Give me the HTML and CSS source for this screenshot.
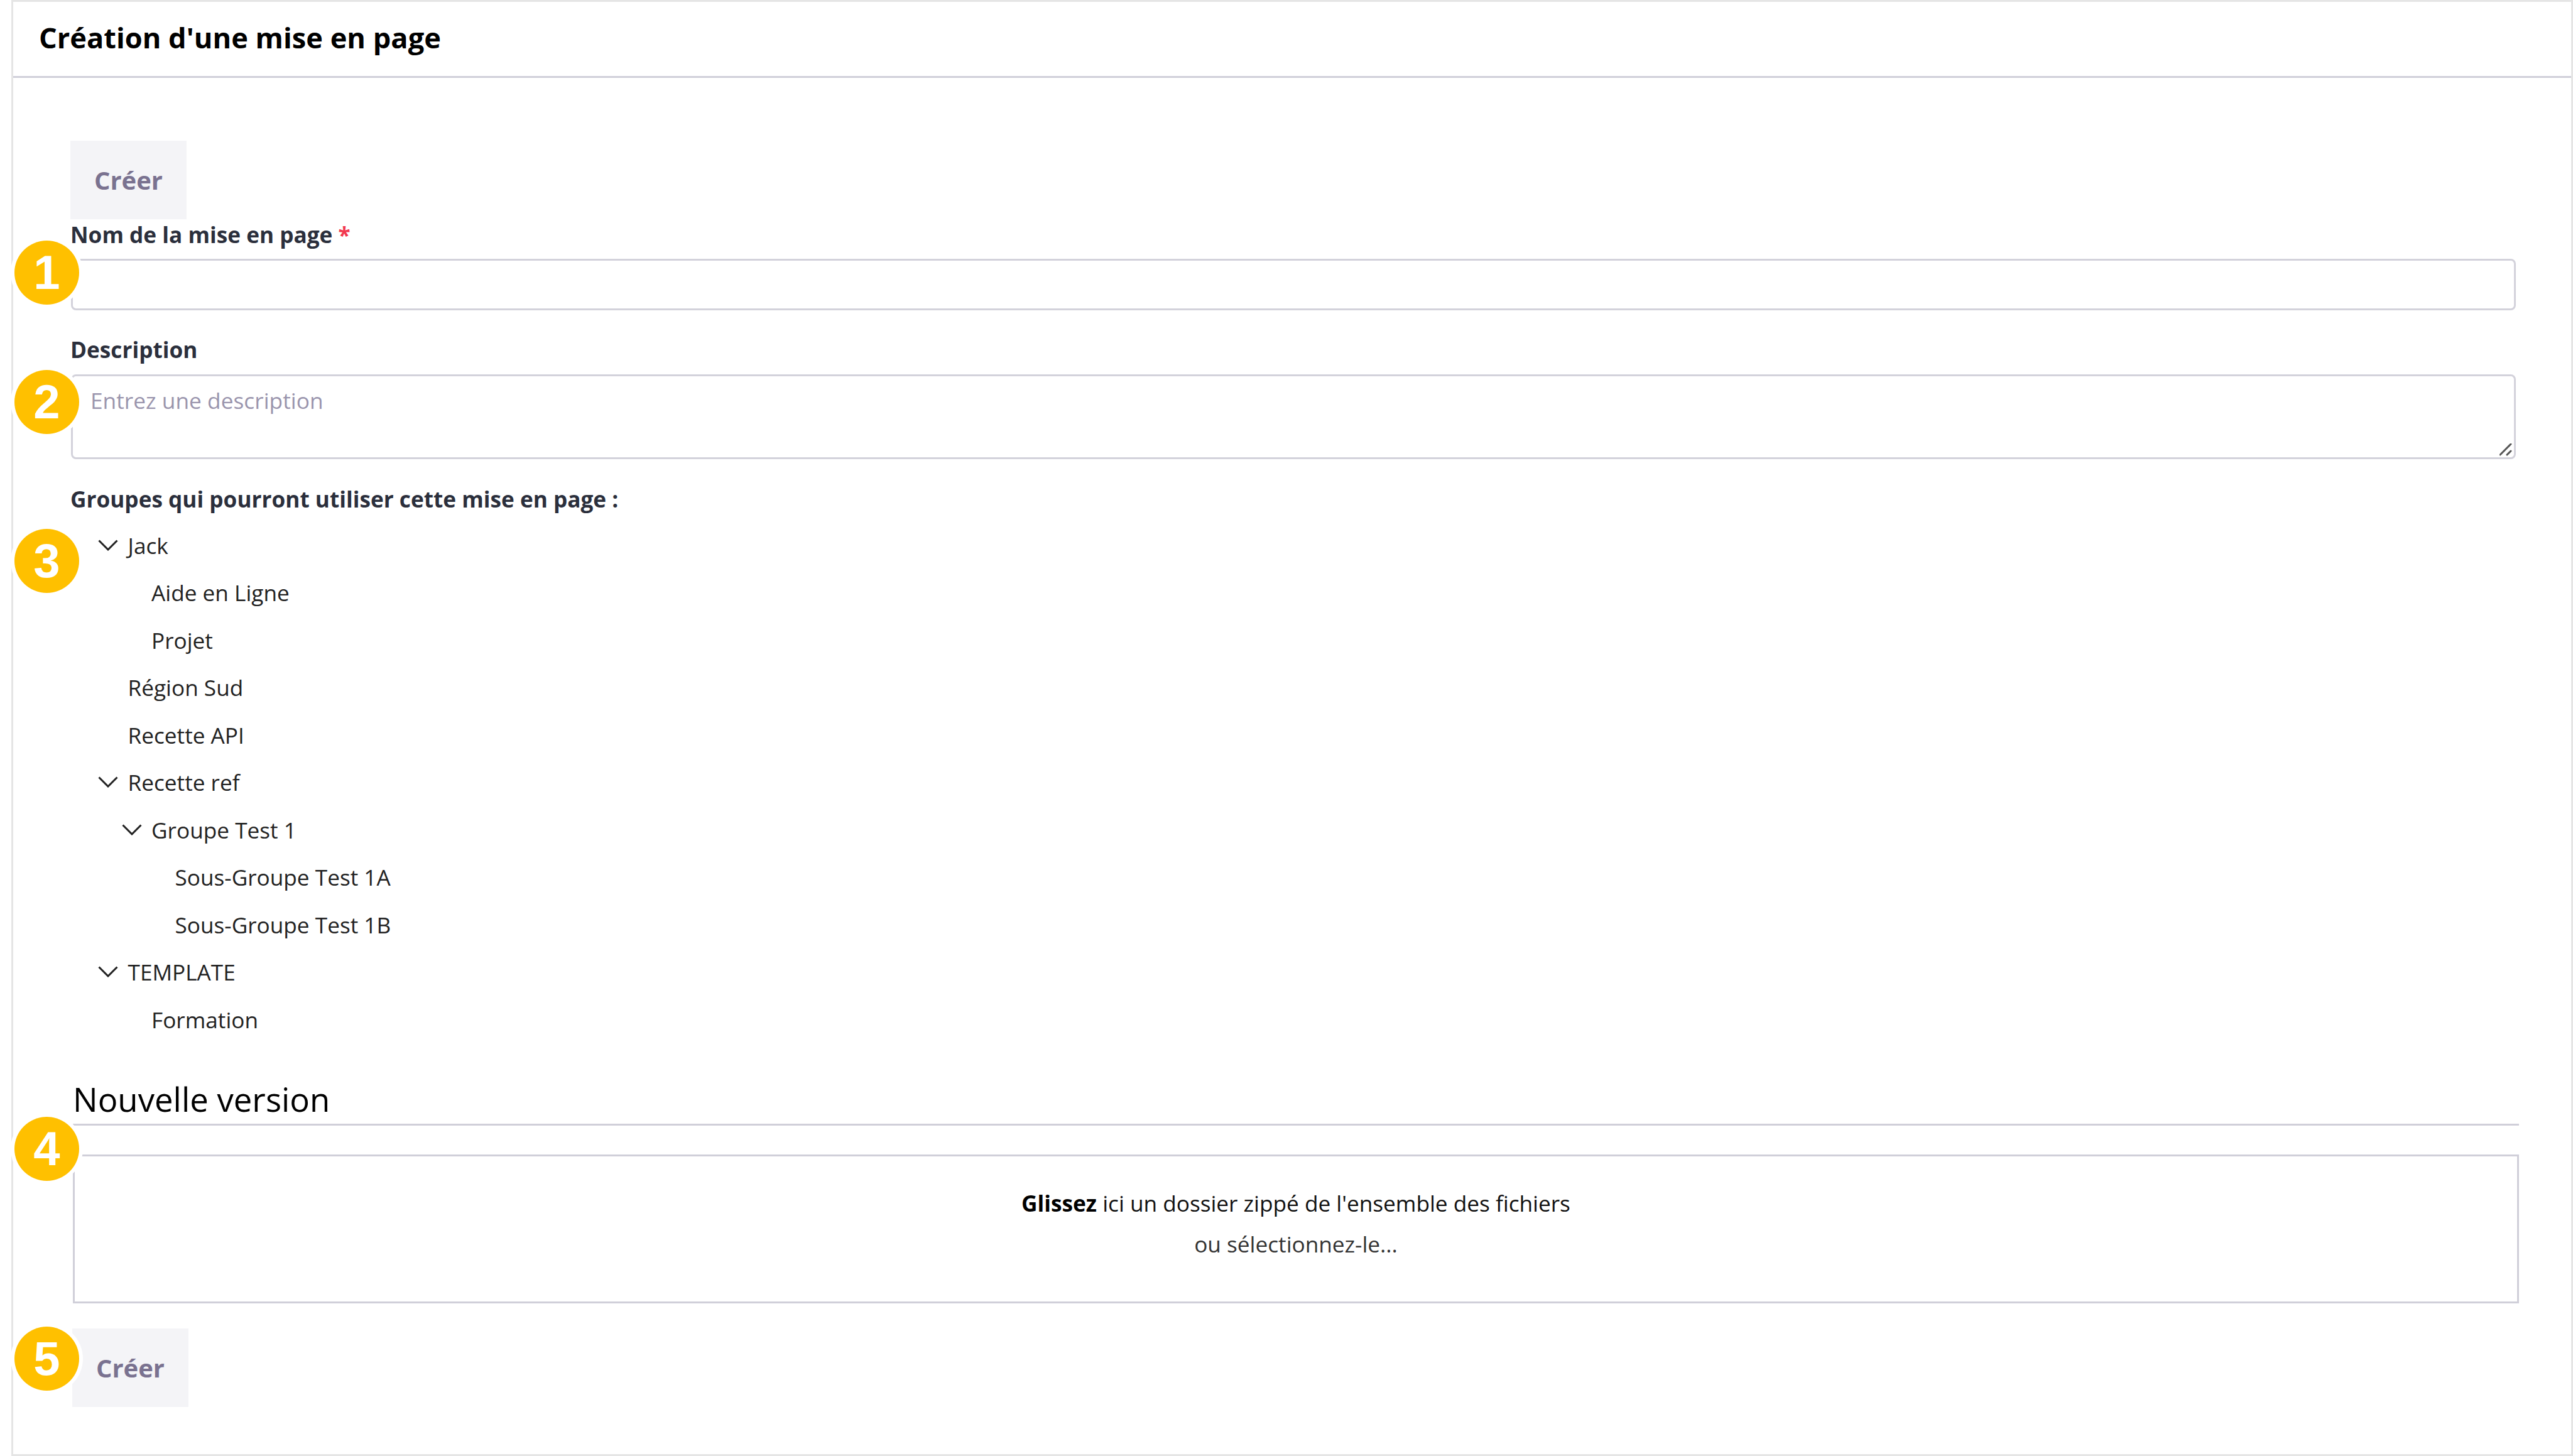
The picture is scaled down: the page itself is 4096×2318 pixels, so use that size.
FILE: index.html
```html
<!DOCTYPE html>
<html lang="fr">
<head>
<meta charset="utf-8">
<title>Création d'une mise en page</title>
<link rel="stylesheet" href="styles.css">
</head>
<body>
<div class="panel">
  <header class="panel-head"><h1 class="panel-title">Création d'une mise en page</h1></header>
  <main class="panel-body">
    <button class="btn" type="button">Créer</button>
    <label class="field-label label-name" for="name">Nom de la mise en page<span class="req"> *</span></label>
    <input class="text-input" id="name" type="text">
    <label class="field-label label-desc" for="desc">Description</label>
    <div class="area-wrap">
      <textarea class="text-area" id="desc" placeholder="Entrez une description"></textarea>
      <svg class="grip" viewBox="0 0 20 20" aria-hidden="true"><path d="M1 18 18 1M12 18 18 12"/></svg>
    </div>
    <div class="field-label label-groups">Groupes qui pourront utiliser cette mise en page :</div>
    <ul class="tree">
      <li class="row"><svg class="chev" viewBox="0 0 32 18"><path d="M1.5 1.5 16 16 30.5 1.5"/></svg><span>Jack</span></li>
      <li class="row depth1"><span class="slot"></span><span>Aide en Ligne</span></li>
      <li class="row depth1"><span class="slot"></span><span>Projet</span></li>
      <li class="row"><span class="slot"></span><span>Région Sud</span></li>
      <li class="row"><span class="slot"></span><span>Recette API</span></li>
      <li class="row"><svg class="chev" viewBox="0 0 32 18"><path d="M1.5 1.5 16 16 30.5 1.5"/></svg><span>Recette ref</span></li>
      <li class="row depth1"><svg class="chev" viewBox="0 0 32 18"><path d="M1.5 1.5 16 16 30.5 1.5"/></svg><span>Groupe Test 1</span></li>
      <li class="row depth2"><span class="slot"></span><span>Sous-Groupe Test 1A</span></li>
      <li class="row depth2"><span class="slot"></span><span>Sous-Groupe Test 1B</span></li>
      <li class="row"><svg class="chev" viewBox="0 0 32 18"><path d="M1.5 1.5 16 16 30.5 1.5"/></svg><span>TEMPLATE</span></li>
      <li class="row depth1"><span class="slot"></span><span>Formation</span></li>
    </ul>
    <section class="version">
      <h2 class="version-title">Nouvelle version</h2>
      <div class="dropzone">
        <p class="drop-line"><strong>Glissez</strong> ici un dossier zippé de l'ensemble des fichiers</p>
        <p class="drop-line drop-sub">ou sélectionnez-le...</p>
      </div>
      <button class="btn btn-last" type="button">Créer</button>
    </section>
  </main>
  <span class="badge b1">1</span>
  <span class="badge b2">2</span>
  <span class="badge b3">3</span>
  <span class="badge b4">4</span>
  <span class="badge b5">5</span>
</div>
</body>
</html>
```
FILE: styles.css
```css
* { box-sizing: border-box; }
html, body { margin: 0; padding: 0; background: #fff; }
body { padding-left: 18px; height: 2318px; overflow: hidden; font-family: "Open Sans", "Noto Sans", sans-serif; }
.panel { position: relative; height: 2318px; border: 3px solid #e5e5e5; background: #fff; }
.panel-head { height: 121px; border-bottom: 3px solid #d0cfd9; padding-left: 41px; display: flex; align-items: center; }
.panel-title { margin: 0 0 5px; font-size: 45.2px; font-weight: 700; color: #000; }
.panel-body { padding-left: 91px; }
.btn { display: block; width: 185px; height: 125px; margin: 100px 0 0; border: 0; background: #f4f4f7; color: #7a7290; font: 700 40px "Open Sans", sans-serif; padding: 0; }
.field-label { display: block; font-size: 35.2px; font-weight: 700; color: #2b2f3c; }
.label-name { height: 49px; line-height: 49px; margin-bottom: 14px; }
.req { color: #f2384e; }
.text-input { display: block; width: 3892px; height: 82px; margin-left: 1px; border: 3px solid #d3d2db; border-radius: 8px; background: #fff; outline: 0; }
.label-desc { height: 49px; line-height: 49px; margin-top: 38px; margin-bottom: 15px; }
.area-wrap { position: relative; width: 3892px; height: 135px; margin-left: 1px; }
.text-area { display: block; width: 100%; height: 100%; padding: 14px 28px; border: 3px solid #d3d2db; border-radius: 8px; background: #fff; resize: none; outline: 0; font: 400 35.3px/48px "Open Sans", sans-serif; }
.text-area::placeholder { color: #9a95ad; opacity: 1; }
.grip { position: absolute; right: 6px; bottom: 5px; width: 20px; height: 20px; }
.grip path { fill: none; stroke: #555; stroke-width: 3; stroke-linecap: round; }
.label-groups { height: 50px; line-height: 50px; margin-top: 38px; }
.tree { list-style: none; margin: 11px 0 0 44px; padding: 0; }
.row { display: flex; align-items: center; height: 75.5px; font-size: 35.2px; color: #222; }
.depth1 { padding-left: 37.5px; }
.depth2 { padding-left: 75px; }
.slot { display: block; flex: none; width: 47.5px; }
.chev { flex: none; width: 32px; height: 18px; margin-right: 15.5px; }
.chev path { fill: none; stroke: #222; stroke-width: 3; }
.version { margin-left: 4px; }
.version-title { margin: 53px 0 0; height: 78px; line-height: 72px; font-size: 52.7px; font-weight: 400; color: #000; border-bottom: 3px solid #d0cfd9; width: 3894px; }
.dropzone { width: 3894px; height: 237px; margin-top: 46px; border: 3px solid #d0cfd9; padding-top: 42px; text-align: center; }
.drop-line { margin: 0; height: 65px; line-height: 65px; font-size: 35.2px; color: #111; }
.drop-line strong { font-weight: 700; color: #000; }
.drop-sub { color: #333; }
.btn-last { margin-top: 40px; margin-left: -1px; }
.badge { position: absolute; left: 2px; width: 103px; height: 102px; border-radius: 50%; background: #ffc000; box-shadow: 0 0 0 6px #fff; color: #fff; font: 700 76px/102px "Liberation Sans", Arial, sans-serif; text-align: center; }
.b1 { top: 380px; }
.b2 { top: 586px; }
.b3 { top: 839px; }
.b4 { top: 1775px; }
.b5 { top: 2109px; }
```
